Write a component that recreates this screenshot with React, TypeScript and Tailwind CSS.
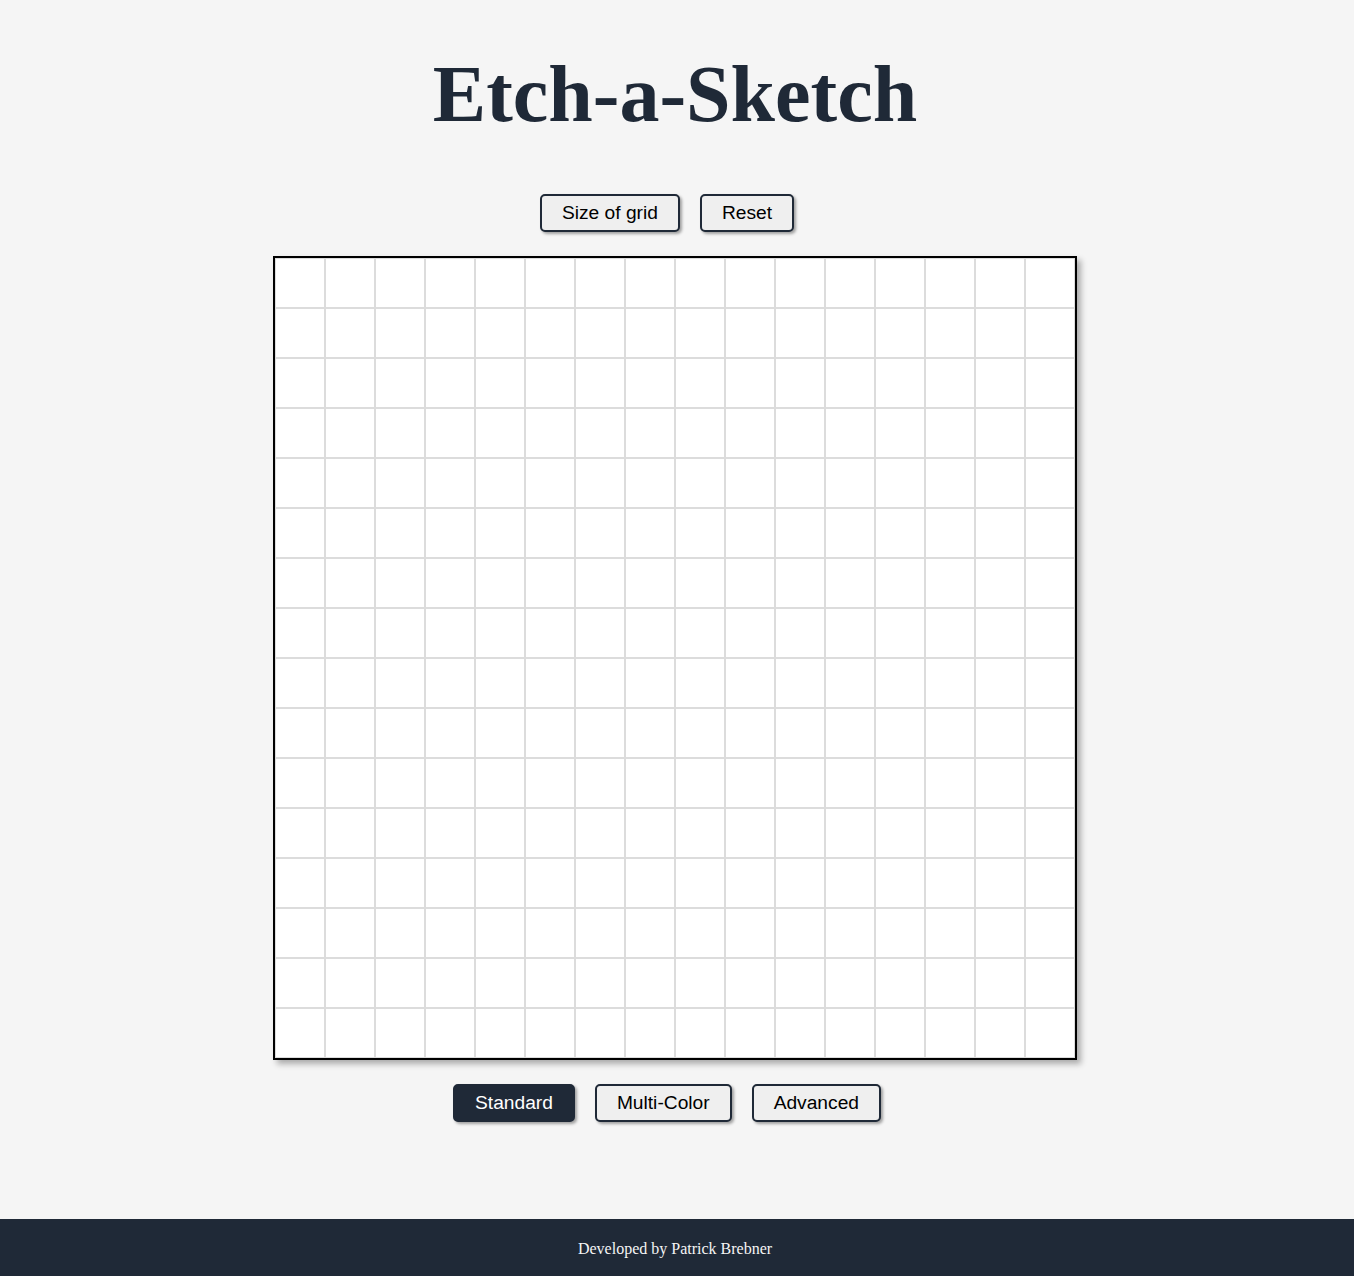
import React, { useState } from 'react';

const GRID = 16;

export default function App() {
  const [mode, setMode] = useState<'standard' | 'multi' | 'advanced'>('standard');
  const cells = Array.from({ length: GRID * GRID });

  const btn = (active: boolean) =>
    `px-5 py-1.5 rounded-[5px] border-2 border-[#1f2937] text-[19.2px] leading-[22px] shadow-[2px_2px_3px_rgba(0,0,0,0.35)] ${
      active ? 'bg-[#1f2937] text-white' : 'bg-[#efefef] text-black'
    }`;

  return (
    <div className="min-h-screen flex flex-col bg-[#f5f5f5] font-['Liberation_Sans',Arial,sans-serif]">
      <main className="flex flex-col items-center pr-1">
        <h1 className="mt-[50px] mb-[55px] text-[80px] leading-[89px] font-bold text-[#1f2937] font-['Liberation_Serif','Times_New_Roman',serif]">
          Etch-a-Sketch
        </h1>

        <div className="flex gap-5 pr-4">
          <button className={btn(false)}>Size of grid</button>
          <button className={btn(false)}>Reset</button>
        </div>

        <div className="mt-6 grid grid-cols-16 w-[804px] h-[804px] border-2 border-black bg-white shadow-[4px_4px_6px_rgba(0,0,0,0.3)]">
          {cells.map((_, i) => (
            <div key={i} className="w-[50px] h-[50px] border border-[#dcdcdc]" />
          ))}
        </div>

        <div className="mt-6 flex gap-5 pr-4">
          <button className={btn(mode === 'standard')} onClick={() => setMode('standard')}>
            Standard
          </button>
          <button className={btn(mode === 'multi')} onClick={() => setMode('multi')}>
            Multi-Color
          </button>
          <button className={btn(mode === 'advanced')} onClick={() => setMode('advanced')}>
            Advanced
          </button>
        </div>
      </main>

      <footer className="mt-auto h-[57px] flex items-center justify-center pt-[2px] pr-1 bg-[#1f2937] text-[#f5f5f5] text-base font-['Liberation_Serif','Times_New_Roman',serif]">
        Developed by Patrick Brebner
      </footer>
    </div>
  );
}
